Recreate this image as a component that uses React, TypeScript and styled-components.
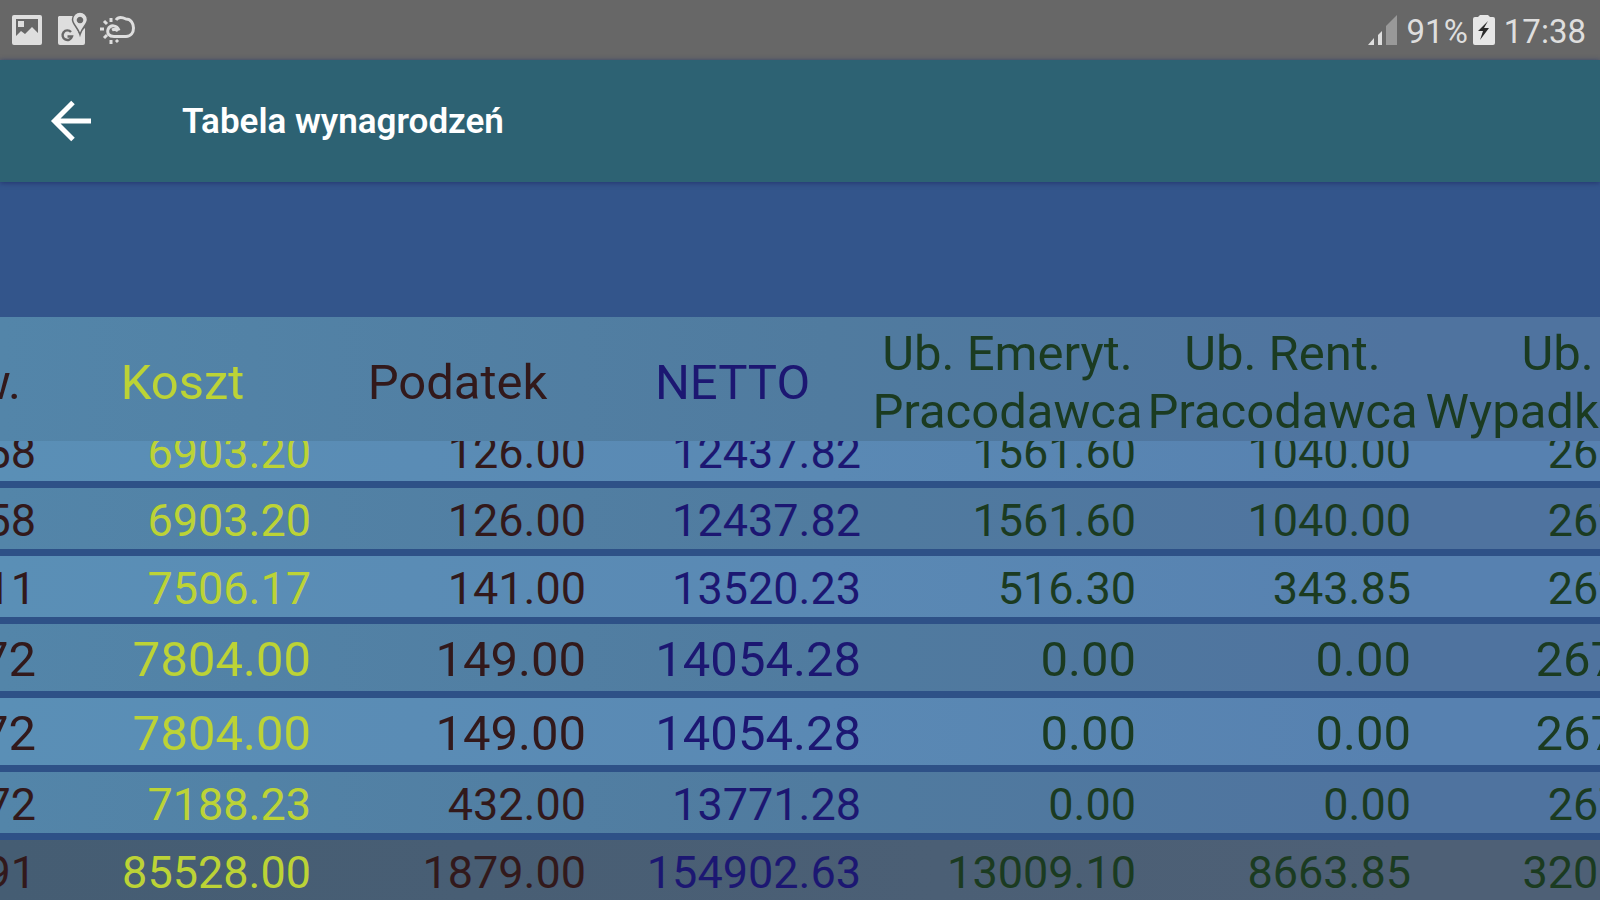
import React from 'react';
import styled, { createGlobalStyle } from 'styled-components';

const GlobalStyle = createGlobalStyle`
  * { box-sizing: border-box; }
  html, body { margin: 0; padding: 0; }
  body { background: #33558b; font-family: Roboto, "Liberation Sans", sans-serif; }
`;

const Screen = styled.div`
  display: flex;
  flex-direction: column;
  height: 100vh;
  overflow: hidden;
  background: #33558b;
`;

const StatusBar = styled.div`
  display: flex;
  flex: none;
  align-items: center;
  justify-content: space-between;
  height: 60px;
  padding: 0 14px 0 10px;
  background: #676767;
  color: #dedede;
`;

const StatusGroup = styled.div<{ $gap: number }>`
  display: flex;
  align-items: center;
  gap: ${(p) => p.$gap}px;
  svg { display: block; flex: none; }
`;

const StatusText = styled.span`
  font-size: 33px;
  line-height: 40px;
  padding-top: 4px;
`;

const AppBar = styled.header`
  position: relative;
  display: flex;
  flex: none;
  align-items: center;
  gap: 81px;
  height: 122px;
  padding-left: 41px;
  background: #2d6273;
  box-shadow: 0 1px 5px #24356e;
`;

const BackButton = styled.button`
  display: flex;
  align-items: center;
  justify-content: center;
  width: 60px;
  height: 60px;
  padding: 0;
  border: 0;
  background: none;
  color: #fff;
`;

const Title = styled.h1`
  margin: 0;
  padding-top: 2px;
  color: #fff;
  font-size: 35px;
  line-height: 44px;
  font-weight: 600;
`;

const TableArea = styled.main`
  flex: 1;
  min-height: 0;
  margin-top: 135px;
  overflow: hidden;
`;

const Table = styled.table`
  display: flex;
  flex-direction: column;
  width: 1925px;
  margin-left: -230px;
`;

const Head = styled.thead`
  display: block;
`;

const Body = styled.tbody`
  display: block;
  overflow: hidden;
`;

const Foot = styled.tfoot`
  display: block;
`;

const dark = 'linear-gradient(90deg, #5385a9 12%, #507b9f 55%, #4f739f 85%)';
const light = 'linear-gradient(90deg, #5a8fb6 12%, #5a89b4 55%, #5781b0 85%)';
const total = 'linear-gradient(90deg, #455d73 12%, #4e6076 85%)';

const HeadRow = styled.tr`
  display: grid;
  grid-template-columns: repeat(7, 1fr);
  align-items: center;
  height: 124px;
  padding-top: 7px;
  background: ${dark};
`;

const Row = styled.tr<{ $fill: string; $large?: boolean }>`
  display: grid;
  grid-template-columns: repeat(7, 1fr);
  align-items: center;
  height: ${(p) => (p.$large ? 74 : 68)}px;
  padding-top: 5px;
  border-bottom: 7px solid #2e5187;
  background: ${(p) => p.$fill};
  background-clip: padding-box;
  font-size: ${(p) => (p.$large ? 49 : 45)}px;
  line-height: 56px;

  ${Body} &:first-child { margin-top: -21px; }
`;

const tones = { brown: '#32191b', lime: '#bcd336', navy: '#1c1772', green: '#1b3b21' };
type Tone = keyof typeof tones;

const HeadCell = styled.th<{ $tone: Tone }>`
  padding: 0;
  color: ${(p) => tones[p.$tone]};
  font-size: 49px;
  line-height: 58px;
  font-weight: 400;
  text-align: center;
  white-space: pre;
`;

const Cell = styled.td<{ $tone: Tone }>`
  padding: 0 9px 0 0;
  color: ${(p) => tones[p.$tone]};
  text-align: right;
`;

const columns: { label: string; tone: Tone }[] = [
  { label: 'Ub. zdrow.', tone: 'brown' },
  { label: 'Koszt', tone: 'lime' },
  { label: 'Podatek', tone: 'brown' },
  { label: 'NETTO', tone: 'navy' },
  { label: 'Ub. Emeryt.\nPracodawca', tone: 'green' },
  { label: 'Ub. Rent.\nPracodawca', tone: 'green' },
  { label: 'Ub.\nWypadkowe', tone: 'green' },
];

const rows: { values: string[]; large?: boolean }[] = [
  { values: ['58', '6903.20', '126.00', '12437.82', '1561.60', '1040.00', '267.20'] },
  { values: ['58', '6903.20', '126.00', '12437.82', '1561.60', '1040.00', '267.20'] },
  { values: ['11', '7506.17', '141.00', '13520.23', '516.30', '343.85', '267.20'] },
  { values: ['72', '7804.00', '149.00', '14054.28', '0.00', '0.00', '267.20'], large: true },
  { values: ['72', '7804.00', '149.00', '14054.28', '0.00', '0.00', '267.20'], large: true },
  { values: ['72', '7188.23', '432.00', '13771.28', '0.00', '0.00', '267.20'] },
];

const totals = ['91', '85528.00', '1879.00', '154902.63', '13009.10', '8663.85', '3206.40'];

const ImageIcon = () => (
  <svg width="34" height="34" viewBox="0 0 34 34" aria-hidden="true">
    <path
      fill="#dedede"
      fillRule="evenodd"
      d="M4 2h26q2 0 2 2v26q0 2-2 2H4q-2 0-2-2V4q0-2 2-2zM6 6v17l5-5 4 3 7-7 6 6V6zM8 8h6v6H8z"
    />
  </svg>
);

const MapsIcon = () => (
  <svg width="34" height="36" viewBox="0 0 34 36" aria-hidden="true">
    <path fill="#dedede" d="M4 4h14c-1 5 2 9 6 17l6-5v15q0 2-2 2H5q-2 0-2-2V5z" />
    <path
      fill="none"
      stroke="#676767"
      strokeWidth="2.4"
      d="M16 20a4.800 4.800 0 1 0 1 4.500h-4.500"
    />
    <path
      fill="#dedede"
      fillRule="evenodd"
      stroke="#676767"
      strokeWidth="1.5"
      d="M25 0a7.500 7.500 0 0 1 7.500 7.500c0 5-5.500 8-7.500 15-2-7-7.500-10-7.500-15a7.500 7.500 0 0 1 7.500-7.500zM25 5.500a2.500 2.500 0 1 0 .01 0z"
    />
  </svg>
);

const WeatherIcon = () => (
  <svg width="38" height="32" viewBox="0 0 38 32" fill="none" stroke="#dedede" aria-hidden="true">
    <path
      strokeWidth="3"
      d="M13 22.500h13c5 0 7.500-4 7.500-8.500S31 5 26 5c-4-2-8-2-10 1M14 22.500c-5 0-7-3-6-7 2-5 9-5 11 1M12 16c2-1 4-1 6 1"
    />
    <path strokeWidth="3" d="M11 4v4M4 7l3 3M0 15h4M4 24l3-3M11 30v-4M18 28l-2-2" />
  </svg>
);

const SignalIcon = () => (
  <svg width="32" height="32" viewBox="0 0 32 32" aria-hidden="true">
    <path fill="#dedede" d="M1 31l6-7v7zM11 21l4-4v14h-4z" />
    <path fill="#999" d="M19 12L30 1v30H19z" />
  </svg>
);

const BatteryIcon = () => (
  <svg width="24" height="32" viewBox="0 0 24 32" aria-hidden="true">
    <path fill="#e6e6e6" d="M6 3l2-2h8l2 2h3q2 0 2 2v24q0 2-2 2H3q-2 0-2-2V5q0-2 2-2z" />
    <path fill="#2b2b2b" d="M16 7L6 17h5l-3 9 9-12h-5z" />
  </svg>
);

const BackIcon = () => (
  <svg width="44" height="44" viewBox="0 0 44 44" fill="none" stroke="currentColor" strokeWidth="5" aria-hidden="true">
    <path d="M42 22H6M24 3.500L5.500 22 24 40.500" />
  </svg>
);

export default function App() {
  return (
    <Screen>
      <GlobalStyle />
      <StatusBar>
        <StatusGroup $gap={11}>
          <ImageIcon />
          <MapsIcon />
          <WeatherIcon />
        </StatusGroup>
        <StatusGroup $gap={8}>
          <SignalIcon />
          <StatusGroup $gap={4}>
            <StatusText>91%</StatusText>
            <BatteryIcon />
          </StatusGroup>
          <StatusText>17:38</StatusText>
        </StatusGroup>
      </StatusBar>
      <AppBar>
        <BackButton type="button" aria-label="Wstecz">
          <BackIcon />
        </BackButton>
        <Title>Tabela wynagrodzeń</Title>
      </AppBar>
      <TableArea>
        <Table>
          <Head>
            <HeadRow>
              {columns.map((c, i) => (
                <HeadCell key={i} scope="col" $tone={c.tone}>
                  {c.label}
                </HeadCell>
              ))}
            </HeadRow>
          </Head>
          <Body>
            {rows.map((r, i) => (
              <Row key={i} $fill={i % 2 ? dark : light} $large={r.large}>
                {r.values.map((v, j) => (
                  <Cell key={j} $tone={columns[j].tone}>
                    {v}
                  </Cell>
                ))}
              </Row>
            ))}
          </Body>
          <Foot>
            <Row $fill={total}>
              {totals.map((v, j) => (
                <Cell key={j} $tone={columns[j].tone}>
                  {v}
                </Cell>
              ))}
            </Row>
          </Foot>
        </Table>
      </TableArea>
    </Screen>
  );
}
